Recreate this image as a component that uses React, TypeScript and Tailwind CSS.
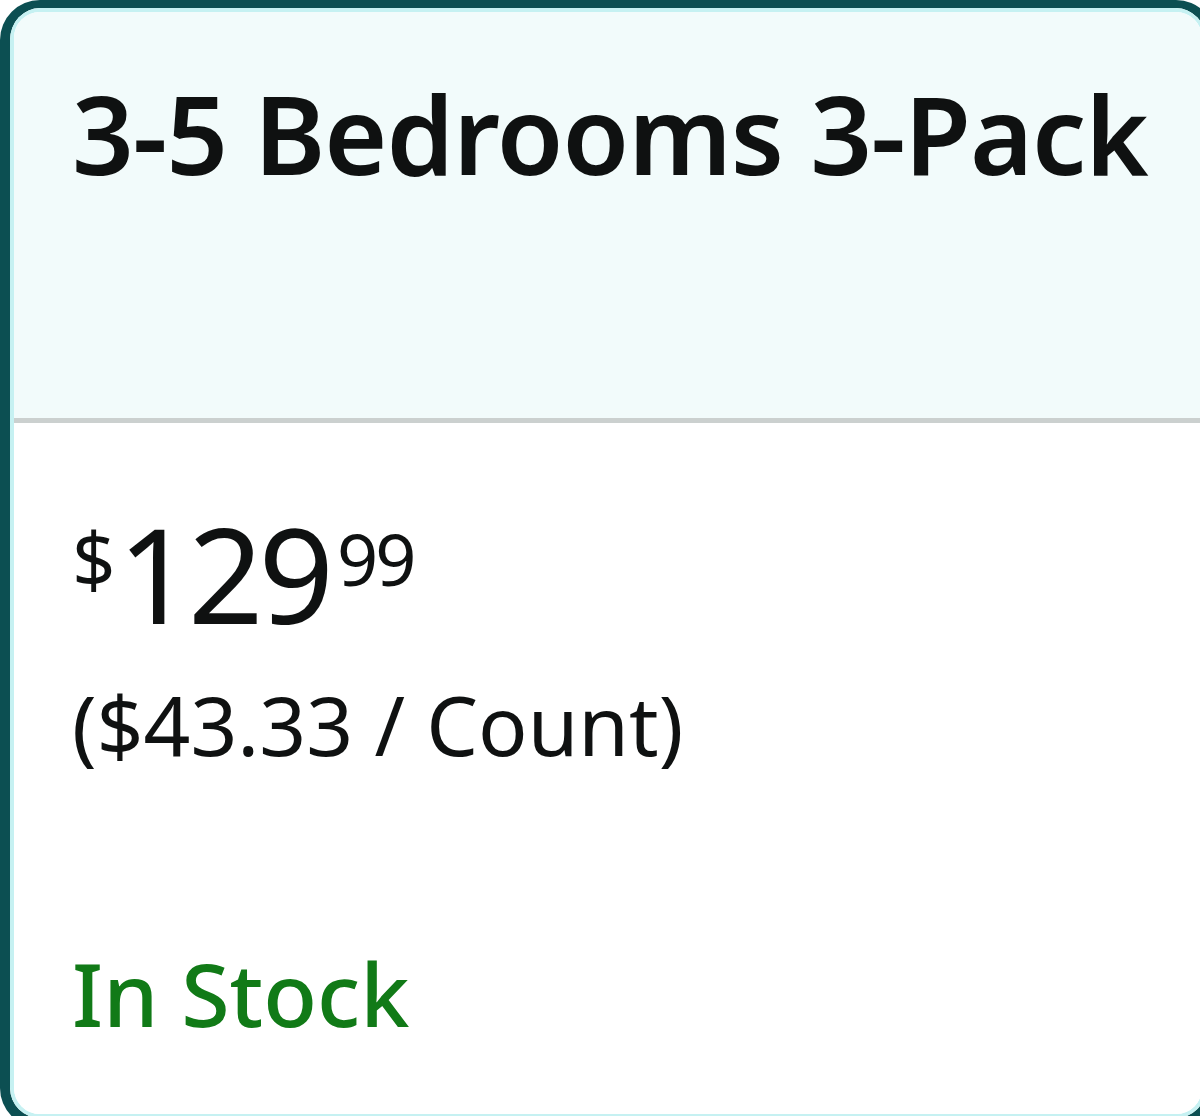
export default function App() {
  return (
    <div className="h-[1116px] w-[1200px] overflow-hidden bg-white" style={{ fontFamily: '"Noto Sans", "Open Sans", sans-serif' }}>
      <div className="h-[1128px] w-[1216px] rounded-[40px] border-l-[10px] border-t-[8px] border-r-[10px] border-b-[10px] border-[#0c4f52] overflow-hidden">
        <div className="h-full w-full rounded-[30px] border-[4px] border-[#c6f1f2] flex flex-col overflow-hidden">
          <div className="h-[406px] bg-[#f2fbfb] pl-[58px] pt-[68px]">
            <h2 className="text-[108px] leading-none font-semibold text-[#0f1111] tracking-[-1px]">3-5 Bedrooms 3-Pack</h2>
          </div>
          <div className="h-[5px] bg-[#cbd0cf]" />
          <div className="flex-1 bg-white pl-[58px] pt-[100px]">
            <div className="flex items-start text-[#0f1111] leading-none">
              <span className="text-[76px] -mt-[2px] mr-[2px]">$</span>
              <span className="text-[132px] -mt-[16px] tracking-[-5px]">129</span>
              <span className="text-[72px] -mt-[1px] ml-[8px] tracking-[-3px]">99</span>
            </div>
            <div className="mt-[44px] text-[82px] leading-none text-[#0f1111]">($43.33 / Count)</div>
            <div className="mt-[184px] text-[88px] leading-none font-medium text-[#117a17]">In Stock</div>
          </div>
        </div>
      </div>
    </div>
  );
}
